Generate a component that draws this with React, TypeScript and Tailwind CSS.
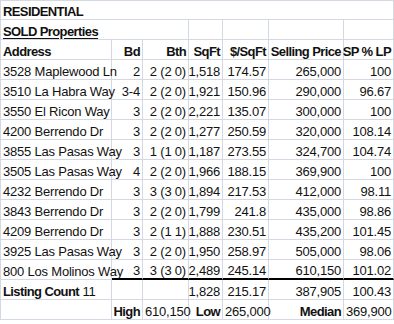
import React from "react";

type Align = "l" | "r";
type Cell = { t: React.ReactNode; a?: Align; b?: boolean; span?: number; thick?: boolean };

const rows: string[][] = [
  ["3528 Maplewood Ln", "2", "2 (2 0)", "1,518", "174.57", "265,000", "100"],
  ["3510 La Habra Way", "3-4", "2 (2 0)", "1,921", "150.96", "290,000", "96.67"],
  ["3550 El Ricon Way", "3", "2 (2 0)", "2,221", "135.07", "300,000", "100"],
  ["4200 Berrendo Dr", "3", "2 (2 0)", "1,277", "250.59", "320,000", "108.14"],
  ["3855 Las Pasas Way", "3", "1 (1 0)", "1,187", "273.55", "324,700", "104.74"],
  ["3505 Las Pasas Way", "4", "2 (2 0)", "1,966", "188.15", "369,900", "100"],
  ["4232 Berrendo Dr", "3", "3 (3 0)", "1,894", "217.53", "412,000", "98.11"],
  ["3843 Berrendo Dr", "3", "2 (2 0)", "1,799", "241.8", "435,000", "98.86"],
  ["4209 Berrendo Dr", "3", "2 (1 1)", "1,888", "230.51", "435,200", "101.45"],
  ["3925 Las Pasas Way", "3", "2 (2 0)", "1,950", "258.97", "505,000", "98.06"],
  ["800 Los Molinos Way", "3", "3 (3 0)", "2,489", "245.14", "610,150", "101.02"],
];

function C({ c, h }: { c: Cell; h: string }) {
  const span =
    c.span === 7 ? "col-span-7" : c.span === 3 ? "col-span-3" : "";
  return (
    <div
      className={[
        "flex items-end overflow-visible whitespace-nowrap border-r border-[#d3d8e2] leading-[15px]",
        h,
        span,
        c.thick ? "border-b-2 border-b-black" : "border-b",
        c.a === "r" ? "justify-end pr-[2px]" : "justify-start pl-[2px]",
        c.b ? "font-bold tracking-[-0.6px]" : "tracking-[-0.2px]",
      ].join(" ")}
    >
      {c.t}
    </div>
  );
}

export default function App() {
  const table: Cell[][] = [];
  table.push([{ t: "RESIDENTIAL", b: true, span: 7 }]);
  table.push([
    { t: <span className="underline underline-offset-[2px]">SOLD Properties</span>, b: true, span: 3 },
    { t: "" },
    { t: "" },
    { t: "" },
    { t: "" },
  ]);
  table.push([
    { t: "Address", b: true },
    { t: "Bd", b: true, a: "r" },
    { t: "Bth", b: true, a: "r" },
    { t: "SqFt", b: true, a: "r" },
    { t: "$/SqFt", b: true, a: "r" },
    { t: "Selling Price", b: true, a: "r" },
    { t: "SP % LP", b: true, a: "r" },
  ]);
  rows.forEach((r, ri) => {
    const last = ri === rows.length - 1;
    table.push(
      r.map((v, i) => ({
        t: v,
        a: i === 0 ? "l" : "r",
        thick: last && i > 0,
      }))
    );
  });
  table.push([
    {
      t: (
        <span>
          <span className="font-bold tracking-[-0.6px]">Listing Count</span> 11
        </span>
      ),
    },
    { t: "" },
    { t: "" },
    { t: "1,828", a: "r" },
    { t: "215.17", a: "r" },
    { t: "387,905", a: "r" },
    { t: "100.43", a: "r" },
  ]);
  table.push([
    { t: "" },
    { t: "High", b: true, a: "r" },
    { t: "610,150" },
    { t: "Low", b: true, a: "r" },
    { t: "265,000" },
    { t: "Median", b: true, a: "r" },
    { t: "369,900" },
  ]);

  return (
    <div
      className="w-[394px] h-[324px] bg-white text-[#111] text-[13px]"
      style={{ fontFamily: '"Liberation Sans", Arial, sans-serif' }}
    >
      <div className="grid grid-cols-[111px_31px_46px_34px_46px_75px_50px] border-t border-l border-[#d3d8e2] w-[394px]">
        {table.map((row, ri) =>
          row.map((c, ci) => (
            <C key={`${ri}-${ci}`} c={c} h={ri === 0 ? "h-[19px]" : "h-[20px]"} />
          ))
        )}
      </div>
    </div>
  );
}
